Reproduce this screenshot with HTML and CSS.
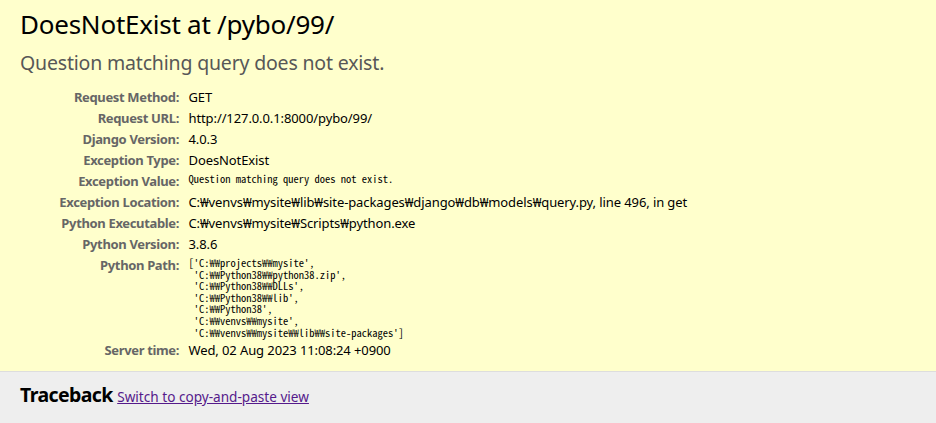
FILE: index.html
```html
<!DOCTYPE html>
<html lang="en">
<head>
<meta charset="utf-8">
<title>DoesNotExist at /pybo/99/</title>
<link rel="stylesheet" href="styles.css">
</head>
<body>
<div class="section summary">
  <h1 class="title">DoesNotExist at /pybo/99/</h1>
  <pre class="exception-value">Question matching query does not exist.</pre>
  <table class="meta">
    <tbody>
      <tr><th>Request Method:</th><td>GET</td></tr>
      <tr><th>Request URL:</th><td>http://127.0.0.1:8000/pybo/99/</td></tr>
      <tr><th>Django Version:</th><td>4.0.3</td></tr>
      <tr><th>Exception Type:</th><td>DoesNotExist</td></tr>
      <tr><th>Exception Value:</th><td><pre class="mono">Question matching query does not exist.</pre></td></tr>
      <tr><th>Exception Location:</th><td><span class="path">C:₩venvs₩mysite₩lib₩site-packages₩django₩db₩models₩query.py</span>, line 496, in get</td></tr>
      <tr><th>Python Executable:</th><td>C:₩venvs₩mysite₩Scripts₩python.exe</td></tr>
      <tr><th>Python Version:</th><td>3.8.6</td></tr>
      <tr><th>Python Path:</th><td><pre class="mono">['C:₩₩projects₩₩mysite',
 'C:₩₩Python38₩₩python38.zip',
 'C:₩₩Python38₩₩DLLs',
 'C:₩₩Python38₩₩lib',
 'C:₩₩Python38',
 'C:₩₩venvs₩₩mysite',
 'C:₩₩venvs₩₩mysite₩₩lib₩₩site-packages']</pre></td></tr>
      <tr><th>Server time:</th><td>Wed, 02 Aug 2023 11:08:24 +0900</td></tr>
    </tbody>
  </table>
</div>
<div class="section traceback">
  <h2 class="tb-title">Traceback <span class="commands"><a href="#">Switch to copy-and-paste view</a></span></h2>
</div>
</body>
</html>
```
FILE: styles.css
```css
html * { margin: 0; padding: 0; }
body {
  margin: 0;
  font-size: 13px;
  font-family: "Noto Sans", "Noto Sans CJK KR", sans-serif;
  background: #fff;
  color: #000;
}
.section {
  padding: 10px 20px;
  border-bottom: 1px solid #ddd;
}
.summary { background: #ffc; }
.title {
  font-size: 26px;
  font-weight: normal;
  line-height: 28px;
  letter-spacing: -0.24px;
}
.exception-value {
  font-family: "Noto Sans", "Noto Sans CJK KR", sans-serif;
  font-size: 19.5px;
  line-height: 26px;
  letter-spacing: -0.18px;
  color: #575757;
  margin: 12px 0 11px;
  white-space: pre-wrap;
}
.meta { border-collapse: collapse; }
.meta th, .meta td {
  vertical-align: top;
  padding: 2px 3px;
  line-height: 17px;
}
.meta td { letter-spacing: -0.1px; }
.meta th {
  width: 12em;
  text-align: right;
  color: #666;
  padding-right: 6.5px;
  letter-spacing: -0.35px;
}
.mono {
  font-family: "Noto Sans Mono CJK KR", "Liberation Mono", monospace;
  font-size: 10.5px;
  line-height: 11.6px;
  letter-spacing: 0;
  white-space: pre-wrap;
}
.traceback { background: #eee; border-bottom: none; min-height: 60px; }
.tb-title {
  font-size: 19.5px;
  line-height: 26px;
  font-weight: bold;
  letter-spacing: -0.6px;
}
.commands {
  font-size: 13.6px;
  font-weight: normal;
  letter-spacing: 0;
  color: #666;
}
.commands a { color: #551a8b; }
```
